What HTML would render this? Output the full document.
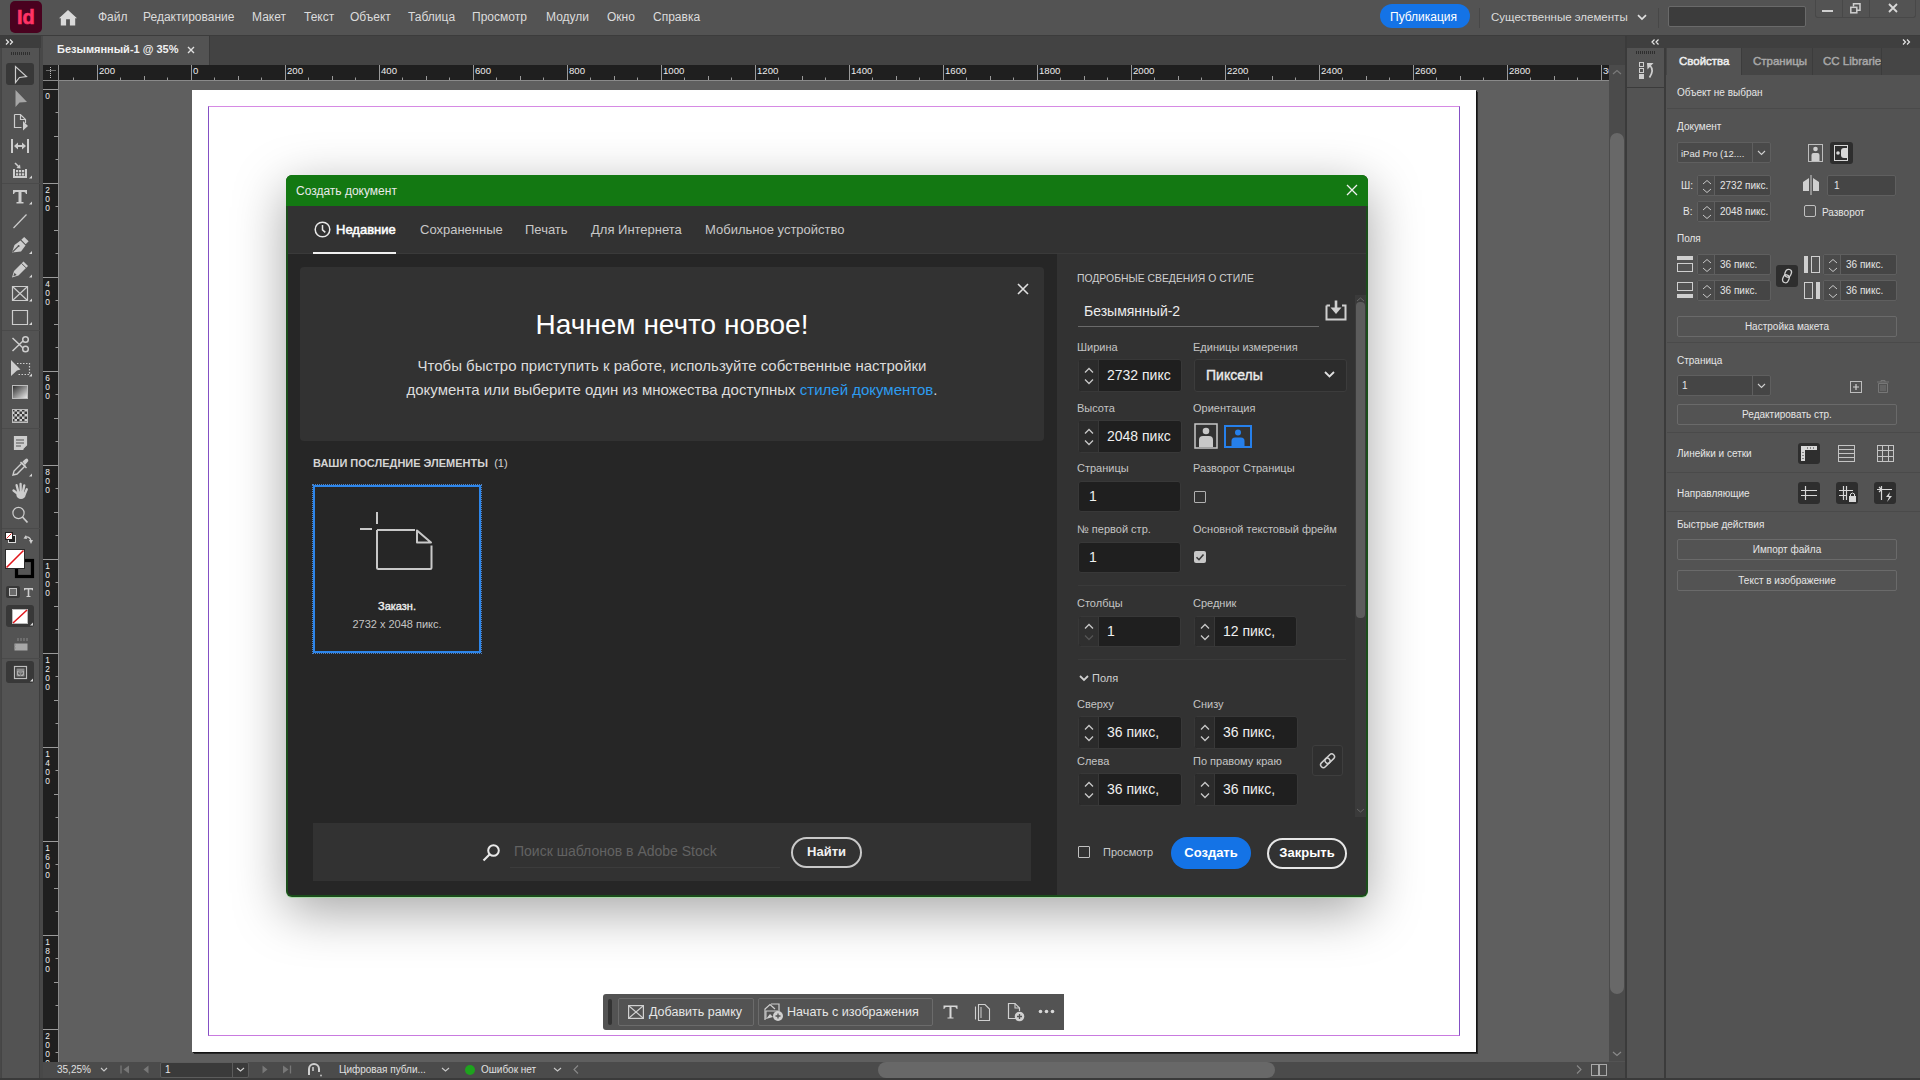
<!DOCTYPE html>
<html><head><meta charset="utf-8">
<style>
*{margin:0;padding:0;box-sizing:border-box}
html,body{width:1920px;height:1080px;overflow:hidden;background:#535353;font-family:"Liberation Sans",sans-serif;color:#d6d6d6}
.a{position:absolute}
svg{position:absolute;overflow:visible}
.dtab{font-size:13px;color:#c8c8c8;white-space:nowrap}
.dl{position:absolute;font-size:11px;color:#c4c4c4;white-space:nowrap}
.fld{position:absolute;background:#1f1f1f;border:1px solid #383838;border-radius:3px;overflow:hidden}
.fld .sp{position:absolute;left:0;top:0;width:20px;height:100%;background:#2b2b2b;border-right:1px solid #383838}
.fld .ft{position:absolute;top:7px;font-size:14px;color:#f0f0f0;white-space:nowrap}
.pt{position:absolute;font-size:11px;white-space:nowrap}
.pp{position:absolute;font-size:10px;color:#e6e6e6;white-space:nowrap}
.pf{position:absolute;background:#454545;border:1px solid #5f5f5f;border-radius:2px;overflow:hidden}
.pf .ps{position:absolute;left:0;top:0;width:17px;height:100%;border-right:1px solid #5f5f5f;background:#4a4a4a}
.pf .pv{position:absolute;left:22px;top:4px;font-size:10px;color:#e6e6e6;white-space:nowrap}
.pb{position:absolute;border:1px solid #6a6a6a;border-radius:2px;font-size:10px;color:#e6e6e6;text-align:center;line-height:19px;white-space:nowrap}
.mi{position:absolute;top:10px;font-size:12px;color:#dcdcdc;white-space:nowrap}
</style></head><body>

<!-- MENU BAR -->
<div class="a" style="left:0;top:0;width:1920px;height:36px;background:#535353;border-bottom:1px solid #3c3c3c"></div>
<div class="a" style="left:10px;top:1px;width:32px;height:32px;background:#49021f;border-radius:5px"></div>
<div class="a" style="left:17px;top:6px;font-size:20px;font-weight:bold;color:#ff3366;-webkit-text-stroke:0.6px #ff3366">Id</div>
<svg style="left:59px;top:9.5px" width="18" height="16"><path d="M9 0L18 8.3L16.2 8.3V15.5H10.9V9.3H7.1V15.5H1.8V8.3H0Z" fill="#d9d9d9"/></svg>
<div class="mi" style="left:98px">Файл</div>
<div class="mi" style="left:143px">Редактирование</div>
<div class="mi" style="left:252px">Макет</div>
<div class="mi" style="left:304px">Текст</div>
<div class="mi" style="left:350px">Объект</div>
<div class="mi" style="left:408px">Таблица</div>
<div class="mi" style="left:472px">Просмотр</div>
<div class="mi" style="left:546px">Модули</div>
<div class="mi" style="left:607px">Окно</div>
<div class="mi" style="left:653px">Справка</div>

<div class="a" style="left:1380px;top:4px;width:90px;height:24px;background:#1473e6;border-radius:12px"></div>
<div class="mi" style="left:1390px;top:10px;color:#fff">Публикация</div>
<div class="a" style="left:1479px;top:8px;width:1px;height:20px;background:#474747"></div>
<div class="mi" style="left:1491px;font-size:11.5px;top:10.5px">Существенные элементы</div>
<svg style="left:1637px;top:14px" width="10" height="7"><path d="M1 1.2L5 5L9 1.2" stroke="#e0e0e0" stroke-width="1.7" fill="none"/></svg>
<div class="a" style="left:1658px;top:8px;width:1px;height:20px;background:#474747"></div>
<div class="a" style="left:1668px;top:6px;width:138px;height:21px;background:#3c3c3c;border:1px solid #6a6a6a;border-radius:2px"></div>
<div class="a" style="left:1815px;top:0;width:101px;height:18px;border:1px solid #484848;border-top:none;border-radius:0 0 3px 3px"></div>
<div class="a" style="left:1842px;top:0;width:1px;height:17px;background:#484848"></div>
<div class="a" style="left:1869px;top:0;width:1px;height:17px;background:#484848"></div>
<div class="a" style="left:1822px;top:10px;width:11px;height:2px;background:#cfcfcf"></div>
<svg style="left:1850px;top:3px" width="11" height="11"><rect x="0.8" y="4.3" width="6" height="5.5" stroke="#cfcfcf" stroke-width="1.5" fill="none"/><path d="M3.5 3.5V0.8H10V7.2H7" stroke="#cfcfcf" stroke-width="1.5" fill="none"/></svg>
<svg style="left:1888px;top:3px" width="10" height="10"><path d="M1 1L9 9M9 1L1 9" stroke="#d8d8d8" stroke-width="1.8"/></svg>

<!-- TAB ROW -->
<div class="a" style="left:0;top:36px;width:1625px;height:29px;background:#434343"></div>
<div class="a" style="left:43px;top:36px;width:167px;height:29px;background:#535353;border-right:1px solid #3a3a3a"></div>
<div class="a" style="left:57px;top:43px;font-size:11px;font-weight:bold;color:#f0f0f0;white-space:nowrap">Безымянный-1 @ 35%</div>
<svg style="left:187px;top:46px" width="8" height="8"><path d="M1 1L7 7M7 1L1 7" stroke="#e0e0e0" stroke-width="1.4"/></svg>

<!-- LEFT TOOLBAR -->
<div class="a" style="left:0;top:36px;width:43px;height:1044px;background:#484848"></div>
<div class="a" style="left:0;top:36px;width:41px;height:12px;background:#3d3d3d"></div>
<svg style="left:5px;top:38px" width="10" height="8"><path d="M1 1.5L3.5 4L1 6.5M5 1.5L7.5 4L5 6.5" stroke="#e6e6e6" stroke-width="1.2" fill="none"/></svg>
<div class="a" style="left:1px;top:48px;width:39px;height:1032px;background:#535353;border-left:1px solid #454545;border-right:1px solid #3e3e3e"></div>
<div class="a" style="left:11px;top:52px;width:19px;height:3px;background:repeating-linear-gradient(90deg,#2e2e2e 0 1px,transparent 1px 2px)"></div>

<!-- TOOL ICONS -->
<div class="a" style="left:6px;top:63px;width:28px;height:22px;background:#383838;border-radius:3px"></div>
<div class="a" style="left:6px;top:605px;width:28px;height:22px;background:#383838;border-radius:3px"></div>
<div class="a" style="left:6px;top:661px;width:28px;height:22px;background:#383838;border-radius:3px"></div>
<svg style="left:0;top:0" width="43" height="700">
<g stroke="#cdcdcd" fill="none" stroke-width="1.2">
<path d="M15.5 66.5V82.5L19.5 77.5L26.5 76.5Z"/>
<path d="M14.5 114.5H20.5L25.5 119.5V123M14.5 114.5V127.5H21.5M20.5 114.5V119.5H25.5"/>
<path d="M12 139V153M28 139V153" stroke-width="2"/><path d="M17 146H23" stroke-width="2"/><path d="M14 146L18 142.5V149.5ZM26 146L22 142.5V149.5Z" fill="#cdcdcd" stroke="none"/>
<path d="M14 169V177H26V169" stroke-width="2"/><path d="M15 163L19 167" stroke-width="1.6"/><path d="M20.5 168.5L16.5 168L20 164.5Z" fill="#cdcdcd" stroke="none"/>
<path d="M16 170H18.2V172.2H16ZM19 170H21.2V172.2H19ZM22 170H24.2V172.2H22ZM16 173.3H18.2V175.5H16ZM19 173.3H21.2V175.5H19ZM22 173.3H24.2V175.5H22Z" fill="#cdcdcd" stroke="none"/>
<path d="M13.5 228L26.5 214.5"/>
<path d="M12.5 286.5H27.5V300.5H12.5Z M12.5 286.5L27.5 300.5M27.5 286.5L12.5 300.5"/>
<path d="M12.5 310.5H27.5V324.5H12.5Z"/>
<path d="M14.5 436.5H26.5V445L23 449.5H14.5Z" fill="#cdcdcd"/>
<circle cx="18.5" cy="513" r="5.6"/>
<path d="M22.5 517L27.5 522.5" stroke-width="1.8"/>
</g>
<!-- T tool -->
<path d="M13 190H27V194H26Q25.5 192 24 192H21.5V202H23.5V203.5H16.5V202H18.5V192H16Q14.5 192 14 194H13Z" fill="#cdcdcd"/>
<path d="M15.5 90V107L19.5 102.5L27 102Z" fill="#a6a6a6"/>
<path d="M23 121V130.5L28 126Z" fill="#cdcdcd"/>
<!-- pen -->
<path d="M12 252.5L14.5 245L20.5 240.5L25.5 245.5L21 251.5Z" fill="#cdcdcd"/>
<path d="M21.3 239.8L24.2 236.9L28.6 241.3L25.7 244.2Z" fill="#cdcdcd"/>
<path d="M12.5 252L18 246.5" stroke="#535353" stroke-width="1.1"/><circle cx="18.6" cy="246" r="1" fill="#535353"/>
<!-- pencil -->
<path d="M12 277.5L14 271L23.5 261.5L28 266L18.5 275.5Z" fill="#cdcdcd"/>
<path d="M21.6 263.4L26.1 267.9" stroke="#535353" stroke-width="1"/>
<path d="M13.3 276.2L14.5 272.8L16.7 275Z" fill="#535353"/>
<!-- scissors -->
<g stroke="#cdcdcd" fill="none" stroke-width="1.5"><circle cx="25.5" cy="339.5" r="2.8"/><circle cx="25.5" cy="349" r="2.8"/><path d="M12.5 338L23 348M12.5 351L23 341"/></g>
<!-- free transform -->
<path d="M11 360L20.5 369.5L17 370.5L11 376Z" fill="#cdcdcd"/>
<path d="M17 363.5H29.5V374.5H17" stroke="#cdcdcd" stroke-width="1.2" stroke-dasharray="1.5 1.5" fill="none"/>
<!-- gradient -->
<defs><linearGradient id="gr" x1="0" y1="0" x2="1" y2="1"><stop offset="0" stop-color="#2a2a2a"/><stop offset="1" stop-color="#f0f0f0"/></linearGradient>
<pattern id="ck" width="5" height="5" patternUnits="userSpaceOnUse" x="12" y="409"><rect width="5" height="5" fill="#cdcdcd"/><rect width="2.5" height="2.5" fill="#3a3a3a"/><rect x="2.5" y="2.5" width="2.5" height="2.5" fill="#3a3a3a"/></pattern></defs>
<rect x="12.5" y="385.5" width="15" height="13" fill="url(#gr)" stroke="#bdbdbd" stroke-width="1"/>
<rect x="12.5" y="409.5" width="15" height="13" fill="url(#ck)" stroke="#bdbdbd" stroke-width="1"/>
<!-- note lines -->
<path d="M16 440H24M16 443H24M16 446H21" stroke="#535353" stroke-width="1.2"/>
<path d="M23 449.5L26.5 446V449.5Z" fill="#535353"/>
<!-- eyedropper -->
<g stroke="#cdcdcd" fill="none" stroke-width="1.4"><path d="M13 475L14 471L22 463L25 466L17 474Z"/><path d="M20.5 462L26.5 468"/></g>
<path d="M22.5 461.5L25.5 459Q27 458 28 459.5Q29 461 27.5 462L25 465Z" fill="#cdcdcd"/>
<!-- hand -->
<g stroke="#cdcdcd" stroke-linecap="round" fill="none" stroke-width="2.3"><path d="M18 494L13.5 490.5"/><path d="M18.2 491.5L16.6 485.2"/><path d="M20.7 491L20.6 484"/><path d="M23 491.5L24.3 485.3"/><path d="M24.8 494L26.8 489.2"/></g><ellipse cx="21" cy="495" rx="4.6" ry="4" fill="#cdcdcd"/>
<!-- tiny triangles -->
<g fill="#d8d8d8">
<path d="M29 178.5H32V175.5Z"/><path d="M29 204.5H32V201.5Z"/><path d="M29 254H32V251Z"/><path d="M29 277.5H32V274.5Z"/>
<path d="M29 301.5H32V298.5Z"/><path d="M29 325H32V322Z"/><path d="M29 376.5H32V373.5Z"/><path d="M29 476.5H32V473.5Z"/>
<path d="M30 625.5H33V622.5Z"/><path d="M30 681.5H33V678.5Z"/>
</g>
<!-- separators -->
<path d="M2 183.5H40M2 330.5H40M2 428.5H40M2 528.5H40M2 658.5H40" stroke="#4a4a4a" stroke-width="1"/>
<!-- default colors small -->
<rect x="8.5" y="535.5" width="7" height="7" fill="#222" stroke="#ddd" stroke-width="1"/>
<rect x="5.5" y="532.5" width="7" height="7" fill="#fff" stroke="#222" stroke-width="1"/>
<path d="M6.5 538.5L11.5 533.5" stroke="#e02020" stroke-width="1"/>
<path d="M25 537Q30 536 31 541" stroke="#cdcdcd" stroke-width="1.3" fill="none"/>
<path d="M23.5 538.5L26 535L27 539Z M29 540H33L31 544Z" fill="#cdcdcd"/>
<!-- stroke swatch -->
<rect x="16.5" y="560.5" width="16" height="16" fill="none" stroke="#000" stroke-width="3.2"/>
<rect x="19" y="563" width="11" height="11" fill="#555"/>
<!-- fill swatch -->
<rect x="5.5" y="549.5" width="19" height="19" fill="#fff" stroke="#2a2a2a" stroke-width="1"/>
<path d="M6.5 567.5L23.5 550.5" stroke="#e0161c" stroke-width="1.6"/>
<!-- container / text -->
<rect x="6" y="586" width="14" height="12" rx="2" fill="#383838"/>
<rect x="9.5" y="588.5" width="7" height="7" fill="#6a6a6a" stroke="#c0c0c0" stroke-width="1"/>
<path d="M24 588H33V590.5H32.5Q32 589.5 31 589.5H29.3V596H30.5V597H26.5V596H27.7V589.5H26Q25 589.5 24.5 590.5H24Z" fill="#cdcdcd"/>
<!-- apply none -->
<rect x="12.5" y="609.5" width="15" height="14" fill="#fff" stroke="#bbb" stroke-width="1"/>
<path d="M13 623L27 610" stroke="#e0161c" stroke-width="1.5"/>
<!-- screen mode -->
<path d="M14.5 643.5H27.5V650.5H14.5Z" fill="#a8a8a8"/>
<path d="M18 638V641M21 638V641M24 638V641M27 638V641M14 645H16M14 648H16" stroke="#8a8a8a" stroke-width="1"/>
<!-- frame icon -->
<rect x="14.5" y="666.5" width="12" height="12" fill="none" stroke="#bdbdbd" stroke-width="1.2"/>
<rect x="16.5" y="668.5" width="8" height="8" fill="#8a8a8a"/>
<path d="M18 671V675H20M23 671V675H21" stroke="#d0d0d0" stroke-width="1"/>
</svg>

<!-- RULERS -->
<div class="a" style="left:43px;top:65px;width:1566px;height:15px;background:#1f1f1f"></div>
<div class="a" style="left:43px;top:80px;width:15px;height:982px;background:#1f1f1f"></div>
<div class="a" style="left:43px;top:80px;width:1566px;height:1px;background:#8a8a8a"></div>
<div class="a" style="left:58px;top:65px;width:1px;height:997px;background:#8a8a8a"></div>
<svg style="left:44px;top:66px" width="14" height="14"><path d="M2.5 4.5H12M6.5 1V13" stroke="#bdbdbd" stroke-width="1" stroke-dasharray="1 1" fill="none"/></svg>
<svg style="left:58px;top:65px" width="1551" height="15"><line x1="15.5" y1="12.5" x2="15.5" y2="15" stroke="#9a9a9a" stroke-width="1"/><line x1="39.5" y1="0" x2="39.5" y2="15" stroke="#9a9a9a" stroke-width="1"/><text x="41.0" y="9" fill="#ececec" font-size="9.6" font-family="Liberation Sans">200</text><line x1="62.5" y1="12.5" x2="62.5" y2="15" stroke="#9a9a9a" stroke-width="1"/><line x1="86.5" y1="11" x2="86.5" y2="15" stroke="#9a9a9a" stroke-width="1"/><line x1="109.5" y1="12.5" x2="109.5" y2="15" stroke="#9a9a9a" stroke-width="1"/><line x1="133.5" y1="0" x2="133.5" y2="15" stroke="#9a9a9a" stroke-width="1"/><text x="135.0" y="9" fill="#ececec" font-size="9.6" font-family="Liberation Sans">0</text><line x1="156.5" y1="12.5" x2="156.5" y2="15" stroke="#9a9a9a" stroke-width="1"/><line x1="180.5" y1="11" x2="180.5" y2="15" stroke="#9a9a9a" stroke-width="1"/><line x1="203.5" y1="12.5" x2="203.5" y2="15" stroke="#9a9a9a" stroke-width="1"/><line x1="227.5" y1="0" x2="227.5" y2="15" stroke="#9a9a9a" stroke-width="1"/><text x="229.0" y="9" fill="#ececec" font-size="9.6" font-family="Liberation Sans">200</text><line x1="250.5" y1="12.5" x2="250.5" y2="15" stroke="#9a9a9a" stroke-width="1"/><line x1="274.5" y1="11" x2="274.5" y2="15" stroke="#9a9a9a" stroke-width="1"/><line x1="297.5" y1="12.5" x2="297.5" y2="15" stroke="#9a9a9a" stroke-width="1"/><line x1="321.5" y1="0" x2="321.5" y2="15" stroke="#9a9a9a" stroke-width="1"/><text x="323.0" y="9" fill="#ececec" font-size="9.6" font-family="Liberation Sans">400</text><line x1="344.5" y1="12.5" x2="344.5" y2="15" stroke="#9a9a9a" stroke-width="1"/><line x1="368.5" y1="11" x2="368.5" y2="15" stroke="#9a9a9a" stroke-width="1"/><line x1="391.5" y1="12.5" x2="391.5" y2="15" stroke="#9a9a9a" stroke-width="1"/><line x1="415.5" y1="0" x2="415.5" y2="15" stroke="#9a9a9a" stroke-width="1"/><text x="417.0" y="9" fill="#ececec" font-size="9.6" font-family="Liberation Sans">600</text><line x1="438.5" y1="12.5" x2="438.5" y2="15" stroke="#9a9a9a" stroke-width="1"/><line x1="462.5" y1="11" x2="462.5" y2="15" stroke="#9a9a9a" stroke-width="1"/><line x1="485.5" y1="12.5" x2="485.5" y2="15" stroke="#9a9a9a" stroke-width="1"/><line x1="509.5" y1="0" x2="509.5" y2="15" stroke="#9a9a9a" stroke-width="1"/><text x="511.0" y="9" fill="#ececec" font-size="9.6" font-family="Liberation Sans">800</text><line x1="532.5" y1="12.5" x2="532.5" y2="15" stroke="#9a9a9a" stroke-width="1"/><line x1="556.5" y1="11" x2="556.5" y2="15" stroke="#9a9a9a" stroke-width="1"/><line x1="579.5" y1="12.5" x2="579.5" y2="15" stroke="#9a9a9a" stroke-width="1"/><line x1="603.5" y1="0" x2="603.5" y2="15" stroke="#9a9a9a" stroke-width="1"/><text x="605.0" y="9" fill="#ececec" font-size="9.6" font-family="Liberation Sans">1000</text><line x1="626.5" y1="12.5" x2="626.5" y2="15" stroke="#9a9a9a" stroke-width="1"/><line x1="650.5" y1="11" x2="650.5" y2="15" stroke="#9a9a9a" stroke-width="1"/><line x1="673.5" y1="12.5" x2="673.5" y2="15" stroke="#9a9a9a" stroke-width="1"/><line x1="697.5" y1="0" x2="697.5" y2="15" stroke="#9a9a9a" stroke-width="1"/><text x="699.0" y="9" fill="#ececec" font-size="9.6" font-family="Liberation Sans">1200</text><line x1="720.5" y1="12.5" x2="720.5" y2="15" stroke="#9a9a9a" stroke-width="1"/><line x1="744.5" y1="11" x2="744.5" y2="15" stroke="#9a9a9a" stroke-width="1"/><line x1="767.5" y1="12.5" x2="767.5" y2="15" stroke="#9a9a9a" stroke-width="1"/><line x1="791.5" y1="0" x2="791.5" y2="15" stroke="#9a9a9a" stroke-width="1"/><text x="793.0" y="9" fill="#ececec" font-size="9.6" font-family="Liberation Sans">1400</text><line x1="814.5" y1="12.5" x2="814.5" y2="15" stroke="#9a9a9a" stroke-width="1"/><line x1="838.5" y1="11" x2="838.5" y2="15" stroke="#9a9a9a" stroke-width="1"/><line x1="861.5" y1="12.5" x2="861.5" y2="15" stroke="#9a9a9a" stroke-width="1"/><line x1="885.5" y1="0" x2="885.5" y2="15" stroke="#9a9a9a" stroke-width="1"/><text x="887.0" y="9" fill="#ececec" font-size="9.6" font-family="Liberation Sans">1600</text><line x1="908.5" y1="12.5" x2="908.5" y2="15" stroke="#9a9a9a" stroke-width="1"/><line x1="932.5" y1="11" x2="932.5" y2="15" stroke="#9a9a9a" stroke-width="1"/><line x1="955.5" y1="12.5" x2="955.5" y2="15" stroke="#9a9a9a" stroke-width="1"/><line x1="979.5" y1="0" x2="979.5" y2="15" stroke="#9a9a9a" stroke-width="1"/><text x="981.0" y="9" fill="#ececec" font-size="9.6" font-family="Liberation Sans">1800</text><line x1="1002.5" y1="12.5" x2="1002.5" y2="15" stroke="#9a9a9a" stroke-width="1"/><line x1="1026.5" y1="11" x2="1026.5" y2="15" stroke="#9a9a9a" stroke-width="1"/><line x1="1049.5" y1="12.5" x2="1049.5" y2="15" stroke="#9a9a9a" stroke-width="1"/><line x1="1073.5" y1="0" x2="1073.5" y2="15" stroke="#9a9a9a" stroke-width="1"/><text x="1075.0" y="9" fill="#ececec" font-size="9.6" font-family="Liberation Sans">2000</text><line x1="1096.5" y1="12.5" x2="1096.5" y2="15" stroke="#9a9a9a" stroke-width="1"/><line x1="1120.5" y1="11" x2="1120.5" y2="15" stroke="#9a9a9a" stroke-width="1"/><line x1="1143.5" y1="12.5" x2="1143.5" y2="15" stroke="#9a9a9a" stroke-width="1"/><line x1="1167.5" y1="0" x2="1167.5" y2="15" stroke="#9a9a9a" stroke-width="1"/><text x="1169.0" y="9" fill="#ececec" font-size="9.6" font-family="Liberation Sans">2200</text><line x1="1190.5" y1="12.5" x2="1190.5" y2="15" stroke="#9a9a9a" stroke-width="1"/><line x1="1214.5" y1="11" x2="1214.5" y2="15" stroke="#9a9a9a" stroke-width="1"/><line x1="1237.5" y1="12.5" x2="1237.5" y2="15" stroke="#9a9a9a" stroke-width="1"/><line x1="1261.5" y1="0" x2="1261.5" y2="15" stroke="#9a9a9a" stroke-width="1"/><text x="1263.0" y="9" fill="#ececec" font-size="9.6" font-family="Liberation Sans">2400</text><line x1="1284.5" y1="12.5" x2="1284.5" y2="15" stroke="#9a9a9a" stroke-width="1"/><line x1="1308.5" y1="11" x2="1308.5" y2="15" stroke="#9a9a9a" stroke-width="1"/><line x1="1331.5" y1="12.5" x2="1331.5" y2="15" stroke="#9a9a9a" stroke-width="1"/><line x1="1355.5" y1="0" x2="1355.5" y2="15" stroke="#9a9a9a" stroke-width="1"/><text x="1357.0" y="9" fill="#ececec" font-size="9.6" font-family="Liberation Sans">2600</text><line x1="1378.5" y1="12.5" x2="1378.5" y2="15" stroke="#9a9a9a" stroke-width="1"/><line x1="1402.5" y1="11" x2="1402.5" y2="15" stroke="#9a9a9a" stroke-width="1"/><line x1="1425.5" y1="12.5" x2="1425.5" y2="15" stroke="#9a9a9a" stroke-width="1"/><line x1="1449.5" y1="0" x2="1449.5" y2="15" stroke="#9a9a9a" stroke-width="1"/><text x="1451.0" y="9" fill="#ececec" font-size="9.6" font-family="Liberation Sans">2800</text><line x1="1472.5" y1="12.5" x2="1472.5" y2="15" stroke="#9a9a9a" stroke-width="1"/><line x1="1496.5" y1="11" x2="1496.5" y2="15" stroke="#9a9a9a" stroke-width="1"/><line x1="1519.5" y1="12.5" x2="1519.5" y2="15" stroke="#9a9a9a" stroke-width="1"/><line x1="1543.5" y1="0" x2="1543.5" y2="15" stroke="#9a9a9a" stroke-width="1"/><text x="1545.0" y="9" fill="#ececec" font-size="9.6" font-family="Liberation Sans">3000</text></svg>
<svg style="left:43px;top:80px" width="15" height="981"><line x1="0" y1="9.5" x2="15" y2="9.5" stroke="#9a9a9a" stroke-width="1"/><text transform="translate(2.2,19.1) scale(0.85,1)" fill="#ececec" font-size="9.8" font-family="Liberation Sans">0</text><line x1="12.5" y1="32.5" x2="15" y2="32.5" stroke="#9a9a9a" stroke-width="1"/><line x1="11" y1="56.5" x2="15" y2="56.5" stroke="#9a9a9a" stroke-width="1"/><line x1="12.5" y1="79.5" x2="15" y2="79.5" stroke="#9a9a9a" stroke-width="1"/><line x1="0" y1="103.5" x2="15" y2="103.5" stroke="#9a9a9a" stroke-width="1"/><text transform="translate(2.2,113.1) scale(0.85,1)" fill="#ececec" font-size="9.8" font-family="Liberation Sans">2</text><text transform="translate(2.2,122.0) scale(0.85,1)" fill="#ececec" font-size="9.8" font-family="Liberation Sans">0</text><text transform="translate(2.2,130.9) scale(0.85,1)" fill="#ececec" font-size="9.8" font-family="Liberation Sans">0</text><line x1="12.5" y1="126.5" x2="15" y2="126.5" stroke="#9a9a9a" stroke-width="1"/><line x1="11" y1="150.5" x2="15" y2="150.5" stroke="#9a9a9a" stroke-width="1"/><line x1="12.5" y1="173.5" x2="15" y2="173.5" stroke="#9a9a9a" stroke-width="1"/><line x1="0" y1="197.5" x2="15" y2="197.5" stroke="#9a9a9a" stroke-width="1"/><text transform="translate(2.2,207.1) scale(0.85,1)" fill="#ececec" font-size="9.8" font-family="Liberation Sans">4</text><text transform="translate(2.2,216.0) scale(0.85,1)" fill="#ececec" font-size="9.8" font-family="Liberation Sans">0</text><text transform="translate(2.2,224.9) scale(0.85,1)" fill="#ececec" font-size="9.8" font-family="Liberation Sans">0</text><line x1="12.5" y1="220.5" x2="15" y2="220.5" stroke="#9a9a9a" stroke-width="1"/><line x1="11" y1="244.5" x2="15" y2="244.5" stroke="#9a9a9a" stroke-width="1"/><line x1="12.5" y1="267.5" x2="15" y2="267.5" stroke="#9a9a9a" stroke-width="1"/><line x1="0" y1="291.5" x2="15" y2="291.5" stroke="#9a9a9a" stroke-width="1"/><text transform="translate(2.2,301.1) scale(0.85,1)" fill="#ececec" font-size="9.8" font-family="Liberation Sans">6</text><text transform="translate(2.2,310.0) scale(0.85,1)" fill="#ececec" font-size="9.8" font-family="Liberation Sans">0</text><text transform="translate(2.2,318.9) scale(0.85,1)" fill="#ececec" font-size="9.8" font-family="Liberation Sans">0</text><line x1="12.5" y1="314.5" x2="15" y2="314.5" stroke="#9a9a9a" stroke-width="1"/><line x1="11" y1="338.5" x2="15" y2="338.5" stroke="#9a9a9a" stroke-width="1"/><line x1="12.5" y1="361.5" x2="15" y2="361.5" stroke="#9a9a9a" stroke-width="1"/><line x1="0" y1="385.5" x2="15" y2="385.5" stroke="#9a9a9a" stroke-width="1"/><text transform="translate(2.2,395.1) scale(0.85,1)" fill="#ececec" font-size="9.8" font-family="Liberation Sans">8</text><text transform="translate(2.2,404.0) scale(0.85,1)" fill="#ececec" font-size="9.8" font-family="Liberation Sans">0</text><text transform="translate(2.2,412.9) scale(0.85,1)" fill="#ececec" font-size="9.8" font-family="Liberation Sans">0</text><line x1="12.5" y1="408.5" x2="15" y2="408.5" stroke="#9a9a9a" stroke-width="1"/><line x1="11" y1="432.5" x2="15" y2="432.5" stroke="#9a9a9a" stroke-width="1"/><line x1="12.5" y1="455.5" x2="15" y2="455.5" stroke="#9a9a9a" stroke-width="1"/><line x1="0" y1="479.5" x2="15" y2="479.5" stroke="#9a9a9a" stroke-width="1"/><text transform="translate(2.2,489.1) scale(0.85,1)" fill="#ececec" font-size="9.8" font-family="Liberation Sans">1</text><text transform="translate(2.2,498.0) scale(0.85,1)" fill="#ececec" font-size="9.8" font-family="Liberation Sans">0</text><text transform="translate(2.2,506.9) scale(0.85,1)" fill="#ececec" font-size="9.8" font-family="Liberation Sans">0</text><text transform="translate(2.2,515.8) scale(0.85,1)" fill="#ececec" font-size="9.8" font-family="Liberation Sans">0</text><line x1="12.5" y1="502.5" x2="15" y2="502.5" stroke="#9a9a9a" stroke-width="1"/><line x1="11" y1="526.5" x2="15" y2="526.5" stroke="#9a9a9a" stroke-width="1"/><line x1="12.5" y1="549.5" x2="15" y2="549.5" stroke="#9a9a9a" stroke-width="1"/><line x1="0" y1="573.5" x2="15" y2="573.5" stroke="#9a9a9a" stroke-width="1"/><text transform="translate(2.2,583.1) scale(0.85,1)" fill="#ececec" font-size="9.8" font-family="Liberation Sans">1</text><text transform="translate(2.2,592.0) scale(0.85,1)" fill="#ececec" font-size="9.8" font-family="Liberation Sans">2</text><text transform="translate(2.2,600.9) scale(0.85,1)" fill="#ececec" font-size="9.8" font-family="Liberation Sans">0</text><text transform="translate(2.2,609.8) scale(0.85,1)" fill="#ececec" font-size="9.8" font-family="Liberation Sans">0</text><line x1="12.5" y1="596.5" x2="15" y2="596.5" stroke="#9a9a9a" stroke-width="1"/><line x1="11" y1="620.5" x2="15" y2="620.5" stroke="#9a9a9a" stroke-width="1"/><line x1="12.5" y1="643.5" x2="15" y2="643.5" stroke="#9a9a9a" stroke-width="1"/><line x1="0" y1="667.5" x2="15" y2="667.5" stroke="#9a9a9a" stroke-width="1"/><text transform="translate(2.2,677.1) scale(0.85,1)" fill="#ececec" font-size="9.8" font-family="Liberation Sans">1</text><text transform="translate(2.2,686.0) scale(0.85,1)" fill="#ececec" font-size="9.8" font-family="Liberation Sans">4</text><text transform="translate(2.2,694.9) scale(0.85,1)" fill="#ececec" font-size="9.8" font-family="Liberation Sans">0</text><text transform="translate(2.2,703.8) scale(0.85,1)" fill="#ececec" font-size="9.8" font-family="Liberation Sans">0</text><line x1="12.5" y1="690.5" x2="15" y2="690.5" stroke="#9a9a9a" stroke-width="1"/><line x1="11" y1="714.5" x2="15" y2="714.5" stroke="#9a9a9a" stroke-width="1"/><line x1="12.5" y1="737.5" x2="15" y2="737.5" stroke="#9a9a9a" stroke-width="1"/><line x1="0" y1="761.5" x2="15" y2="761.5" stroke="#9a9a9a" stroke-width="1"/><text transform="translate(2.2,771.1) scale(0.85,1)" fill="#ececec" font-size="9.8" font-family="Liberation Sans">1</text><text transform="translate(2.2,780.0) scale(0.85,1)" fill="#ececec" font-size="9.8" font-family="Liberation Sans">6</text><text transform="translate(2.2,788.9) scale(0.85,1)" fill="#ececec" font-size="9.8" font-family="Liberation Sans">0</text><text transform="translate(2.2,797.8) scale(0.85,1)" fill="#ececec" font-size="9.8" font-family="Liberation Sans">0</text><line x1="12.5" y1="784.5" x2="15" y2="784.5" stroke="#9a9a9a" stroke-width="1"/><line x1="11" y1="808.5" x2="15" y2="808.5" stroke="#9a9a9a" stroke-width="1"/><line x1="12.5" y1="831.5" x2="15" y2="831.5" stroke="#9a9a9a" stroke-width="1"/><line x1="0" y1="855.5" x2="15" y2="855.5" stroke="#9a9a9a" stroke-width="1"/><text transform="translate(2.2,865.1) scale(0.85,1)" fill="#ececec" font-size="9.8" font-family="Liberation Sans">1</text><text transform="translate(2.2,874.0) scale(0.85,1)" fill="#ececec" font-size="9.8" font-family="Liberation Sans">8</text><text transform="translate(2.2,882.9) scale(0.85,1)" fill="#ececec" font-size="9.8" font-family="Liberation Sans">0</text><text transform="translate(2.2,891.8) scale(0.85,1)" fill="#ececec" font-size="9.8" font-family="Liberation Sans">0</text><line x1="12.5" y1="878.5" x2="15" y2="878.5" stroke="#9a9a9a" stroke-width="1"/><line x1="11" y1="902.5" x2="15" y2="902.5" stroke="#9a9a9a" stroke-width="1"/><line x1="12.5" y1="925.5" x2="15" y2="925.5" stroke="#9a9a9a" stroke-width="1"/><line x1="0" y1="949.5" x2="15" y2="949.5" stroke="#9a9a9a" stroke-width="1"/><text transform="translate(2.2,959.1) scale(0.85,1)" fill="#ececec" font-size="9.8" font-family="Liberation Sans">2</text><text transform="translate(2.2,968.0) scale(0.85,1)" fill="#ececec" font-size="9.8" font-family="Liberation Sans">0</text><text transform="translate(2.2,976.9) scale(0.85,1)" fill="#ececec" font-size="9.8" font-family="Liberation Sans">0</text><text transform="translate(2.2,985.8) scale(0.85,1)" fill="#ececec" font-size="9.8" font-family="Liberation Sans">0</text><line x1="12.5" y1="972.5" x2="15" y2="972.5" stroke="#9a9a9a" stroke-width="1"/></svg>

<!-- CANVAS -->
<div class="a" style="left:59px;top:81px;width:1550px;height:981px;background:#5f5f5f"></div>
<div class="a" style="left:192px;top:90px;width:1284px;height:962px;background:#fff;box-shadow:1px 1px 0 #141414,2px 2px 0 #2a2a2a"></div>
<div class="a" style="left:208px;top:106px;width:1252px;height:930px;border-top:1px solid #d68ae4;border-bottom:1px solid #c97ae0;border-left:1px solid #8450c4;border-right:1px solid #8450c4"></div>

<!-- canvas vertical scrollbar -->
<div class="a" style="left:1609px;top:65px;width:16px;height:996px;background:#4b4b4b"></div>
<svg style="left:1612px;top:69px" width="10" height="6"><path d="M1 5L5 1.5L9 5" stroke="#7a7a7a" stroke-width="1.2" fill="none"/></svg>
<div class="a" style="left:1610px;top:133px;width:14px;height:861px;background:#686868;border-radius:7px"></div>
<svg style="left:1612px;top:1051px" width="10" height="6"><path d="M1 1L5 4.5L9 1" stroke="#8a8a8a" stroke-width="1.2" fill="none"/></svg>

<!-- STATUS BAR -->
<div class="a" style="left:43px;top:1062px;width:1582px;height:16px;background:#4b4b4b"></div>
<div class="a" style="left:0;top:1078px;width:1920px;height:2px;background:#3a3a3a"></div>
<div class="a" style="left:57px;top:1064px;font-size:10px;color:#e0e0e0">35,25%</div>
<svg style="left:100px;top:1067px" width="8" height="5"><path d="M1 1L4 4L7 1" stroke="#c8c8c8" stroke-width="1.1" fill="none"/></svg>
<svg style="left:120px;top:1065px" width="10" height="9"><path d="M1 0.5V8.5" stroke="#777" stroke-width="1.3"/><path d="M9 0.5L3.5 4.5L9 8.5Z" fill="#777"/></svg>
<svg style="left:143px;top:1065px" width="6" height="9"><path d="M5.5 0.5L0.5 4.5L5.5 8.5Z" fill="#777"/></svg>
<div class="a" style="left:160px;top:1062px;width:89px;height:16px;background:#3a3a3a;border:1px solid #5c5c5c;border-radius:2px"></div>
<div class="a" style="left:232px;top:1062px;width:1px;height:16px;background:#5c5c5c"></div>
<div class="a" style="left:165px;top:1064px;font-size:10px;color:#e8e8e8">1</div>
<svg style="left:236px;top:1067px" width="9" height="5"><path d="M1 1L4.5 4L8 1" stroke="#d0d0d0" stroke-width="1.1" fill="none"/></svg>
<svg style="left:262px;top:1065px" width="6" height="9"><path d="M0.5 0.5L5.5 4.5L0.5 8.5Z" fill="#777"/></svg>
<svg style="left:282px;top:1065px" width="10" height="9"><path d="M1 0.5L6.5 4.5L1 8.5Z" fill="#777"/><path d="M8.5 0.5V8.5" stroke="#777" stroke-width="1.3"/></svg>
<svg style="left:307px;top:1063px" width="16" height="14"><path d="M2 12V6A5 5 0 0 1 12 6V9" stroke="#d0d0d0" stroke-width="2" fill="none"/><path d="M6 4V8" stroke="#d0d0d0" stroke-width="1.5"/><circle cx="14" cy="12.5" r="1" fill="#bbb"/></svg>
<div class="a" style="left:339px;top:1064px;font-size:10px;color:#e0e0e0;white-space:nowrap">Цифровая публи...</div>
<svg style="left:441px;top:1067px" width="9" height="5"><path d="M1 1L4.5 4L8 1" stroke="#c8c8c8" stroke-width="1.1" fill="none"/></svg>
<div class="a" style="left:465px;top:1065px;width:10px;height:10px;border-radius:5px;background:#1ea31e"></div>
<div class="a" style="left:481px;top:1064px;font-size:10px;color:#e0e0e0;white-space:nowrap">Ошибок нет</div>
<svg style="left:553px;top:1067px" width="9" height="5"><path d="M1 1L4.5 4L8 1" stroke="#c8c8c8" stroke-width="1.1" fill="none"/></svg>
<svg style="left:573px;top:1065px" width="6" height="9"><path d="M5 0.5L1 4.5L5 8.5" stroke="#8a8a8a" stroke-width="1.1" fill="none"/></svg>
<div class="a" style="left:878px;top:1062px;width:397px;height:16px;background:#686868;border-radius:8px"></div>
<svg style="left:1576px;top:1065px" width="6" height="9"><path d="M1 0.5L5 4.5L1 8.5" stroke="#8a8a8a" stroke-width="1.1" fill="none"/></svg>
<div class="a" style="left:1591px;top:1064px;width:16px;height:12px;border:1.5px solid #a8a8a8"></div>
<div class="a" style="left:1598px;top:1064px;width:1.5px;height:12px;background:#a8a8a8"></div>

<!-- RIGHT DOCK BORDERS -->
<div class="a" style="left:1625px;top:36px;width:295px;height:1042px;background:#535353"></div>
<div class="a" style="left:1625px;top:36px;width:2px;height:1042px;background:#3b3b3b"></div>
<div class="a" style="left:1664px;top:36px;width:2px;height:1042px;background:#3b3b3b"></div>
<div class="a" style="left:1627px;top:36px;width:293px;height:12px;background:#3f3f3f"></div>
<svg style="left:1650px;top:38px" width="10" height="8"><path d="M4.5 1.5L2 4L4.5 6.5M8.5 1.5L6 4L8.5 6.5" stroke="#e6e6e6" stroke-width="1.2" fill="none"/></svg>
<svg style="left:1902px;top:38px" width="10" height="8"><path d="M1 1.5L3.5 4L1 6.5M5 1.5L7.5 4L5 6.5" stroke="#e6e6e6" stroke-width="1.2" fill="none"/></svg>
<div class="a" style="left:1627px;top:87px;width:37px;height:1px;background:#3b3b3b"></div>
<div class="a" style="left:1636px;top:51px;width:19px;height:3px;background:repeating-linear-gradient(90deg,#2e2e2e 0 1px,transparent 1px 2px)"></div>

<!-- FLOATING CONTEXT BAR -->
<div class="a" style="left:603px;top:994px;width:461px;height:36px;background:#535353;border-radius:3px 0 0 3px"></div>
<div class="a" style="left:608px;top:999px;width:4px;height:26px;background:#333;border-radius:2px"></div>
<div class="a" style="left:618px;top:998px;width:136px;height:28px;border:1px solid #6b6b6b;border-radius:2px"></div>
<svg style="left:628px;top:1005px" width="16" height="14"><rect x="0.6" y="0.6" width="14.8" height="12.8" stroke="#d0d0d0" stroke-width="1.2" fill="none"/><path d="M1 1L15 13M15 1L1 13" stroke="#d0d0d0" stroke-width="1.1"/></svg>
<div class="a" style="left:649px;top:1004.5px;font-size:12.5px;color:#e6e6e6;white-space:nowrap">Добавить рамку</div>
<div class="a" style="left:758px;top:998px;width:175px;height:28px;border:1px solid #6b6b6b;border-radius:2px"></div>
<svg style="left:764px;top:1003px" width="20" height="18"><path d="M1 17V6L6 1.5L11 6" stroke="#d0d0d0" stroke-width="1.2" fill="none"/><path d="M2 16V8H14V9" stroke="#d0d0d0" stroke-width="1" fill="none"/><path d="M7 1H15V8" stroke="#d0d0d0" stroke-width="1.2" fill="none"/><path d="M2 16L6 11L9 14" fill="#d0d0d0"/><circle cx="14" cy="13" r="5" fill="#d0d0d0"/><path d="M14 10.5V15.5M11.5 13H16.5" stroke="#535353" stroke-width="1.3"/></svg>
<div class="a" style="left:787px;top:1004.5px;font-size:12.6px;color:#e6e6e6;white-space:nowrap">Начать с изображения</div>
<svg style="left:943px;top:1005px" width="15" height="14"><path d="M0.5 0.5H14.5V4H13.7Q13.3 2 11.5 2H8.5V12.5H10.5V13.5H4.5V12.5H6.5V2H3.5Q1.7 2 1.3 4H0.5Z" fill="#d8d8d8"/></svg>
<svg style="left:975px;top:1004px" width="15" height="17"><path d="M3.5 0.5H10L14.5 5V16.5H3.5Z" stroke="#d0d0d0" stroke-width="1.1" fill="none"/><path d="M0.5 2.5V15.5" stroke="#d0d0d0" stroke-width="1.1"/><path d="M6 3V14" stroke="#d0d0d0" stroke-width="1"/></svg>
<svg style="left:1007px;top:1003px" width="18" height="19"><path d="M9 15.5H1.5V0.5H8L12.5 5V8" stroke="#d0d0d0" stroke-width="1.2" fill="none"/><path d="M8 0.5V5H12.5" stroke="#d0d0d0" stroke-width="1.1" fill="none"/><circle cx="12.5" cy="13.5" r="4.8" fill="#d0d0d0"/><path d="M12.5 11V16M10 13.5H15" stroke="#535353" stroke-width="1.3"/></svg>
<svg style="left:1038px;top:1009px" width="18" height="5"><circle cx="2.5" cy="2.5" r="1.8" fill="#d8d8d8"/><circle cx="8.5" cy="2.5" r="1.8" fill="#d8d8d8"/><circle cx="14.5" cy="2.5" r="1.8" fill="#d8d8d8"/></svg>

<!-- DIALOG -->
<div class="a" style="left:286px;top:175px;width:1082px;height:722px;border-radius:6px;box-shadow:0 1px 0 #a9d9a9,0 14px 52px rgba(0,0,0,0.36);background:#1b4d1b"></div>
<div class="a" style="left:286px;top:175px;width:1082px;height:31px;background:#137812;border-radius:6px 6px 0 0"></div>
<div class="a" style="left:296px;top:184px;font-size:12px;color:#eaeaea;white-space:nowrap">Создать документ</div>
<svg style="left:1346px;top:184px" width="12" height="12"><path d="M1 1L11 11M11 1L1 11" stroke="#f0f0f0" stroke-width="1.3"/></svg>
<div class="a" style="left:288px;top:206px;width:1078px;height:689px;background:#262626;border-radius:0 0 4px 4px"></div>
<div class="a" style="left:288px;top:206px;width:1078px;height:48px;background:#323232"></div>
<div class="a" style="left:1057px;top:254px;width:309px;height:641px;background:#323232;border-radius:0 0 4px 0"></div>

<!-- tabs -->
<svg style="left:314px;top:221px" width="17" height="17"><circle cx="8.5" cy="8.5" r="7.3" stroke="#e8e8e8" stroke-width="1.5" fill="none"/><path d="M8.5 4V8.8L11.3 11.4" stroke="#e8e8e8" stroke-width="1.5" fill="none"/></svg>
<div class="a dtab" style="left:336px;top:222px;color:#fff;-webkit-text-stroke:0.5px #fff">Недавние</div>
<div class="a dtab" style="left:420px;top:222px">Сохраненные</div>
<div class="a dtab" style="left:525px;top:222px">Печать</div>
<div class="a dtab" style="left:591px;top:222px">Для Интернета</div>
<div class="a dtab" style="left:705px;top:222px">Мобильное устройство</div>
<div class="a" style="left:288px;top:253px;width:1078px;height:1px;background:#3a3a3a"></div>
<div class="a" style="left:313px;top:252px;width:83px;height:2px;background:#f0f0f0"></div>

<!-- hero -->
<div class="a" style="left:300px;top:267px;width:744px;height:174px;background:#323232;border-radius:4px"></div>
<svg style="left:1017px;top:283px" width="12" height="12"><path d="M1 1L11 11M11 1L1 11" stroke="#e0e0e0" stroke-width="1.6"/></svg>
<div class="a" style="left:300px;top:309px;width:744px;text-align:center;font-size:28px;color:#fff;white-space:nowrap">Начнем нечто новое!</div>
<div class="a" style="left:300px;top:354px;width:744px;text-align:center;font-size:15px;line-height:24px;color:#dcdcdc;white-space:nowrap">Чтобы быстро приступить к работе, используйте собственные настройки<br>документа или выберите один из множества доступных <span style="color:#2d9cf0">стилей документов</span>.</div>

<!-- recent -->
<div class="a" style="left:313px;top:457px;font-size:11px;font-weight:bold;color:#d4d4d4;white-space:nowrap">ВАШИ ПОСЛЕДНИЕ ЭЛЕМЕНТЫ&nbsp;&nbsp;<span style="font-weight:normal">(1)</span></div>
<div class="a" style="left:312px;top:484px;width:170px;height:170px;border:1px dotted #4d7fc0;background:#262626"></div><div class="a" style="left:313px;top:485px;width:168px;height:168px;border:2px solid #2d86ea"></div>
<svg style="left:355px;top:508px" width="80" height="66"><path d="M22 4V16M5 21H17" stroke="#c8c8c8" stroke-width="2" fill="none"/><path d="M22 22H60M76.5 37.5V59.5Q76.5 61 75 61H23.5Q22 61 22 59.5V22" stroke="#c8c8c8" stroke-width="2" fill="none"/><path d="M62 22.5V34.5H76L62 22.5Z" stroke="#c8c8c8" stroke-width="2" fill="none" stroke-linejoin="round"/></svg>
<div class="a" style="left:312px;top:600px;width:170px;text-align:center;font-size:11px;color:#f0f0f0;-webkit-text-stroke:0.35px #f0f0f0">Заказн.</div>
<div class="a" style="left:312px;top:618px;width:170px;text-align:center;font-size:11px;color:#c4c4c4">2732 x 2048 пикс.</div>

<!-- search -->
<div class="a" style="left:313px;top:823px;width:718px;height:58px;background:#323232"></div>
<svg style="left:482px;top:843px" width="19" height="19"><circle cx="11.5" cy="7.5" r="5.3" stroke="#e8e8e8" stroke-width="2" fill="none"/><path d="M7.5 11.5L1.5 17.5" stroke="#e8e8e8" stroke-width="2.2"/></svg>
<div class="a" style="left:514px;top:843px;font-size:14px;color:#626262;white-space:nowrap">Поиск шаблонов в Adobe Stock</div>
<div class="a" style="left:510px;top:867px;width:270px;height:1px;background:#3c3c3c"></div>
<div class="a" style="left:791px;top:837px;width:71px;height:31px;border:2px solid #c8c8c8;border-radius:16px"></div>
<div class="a" style="left:791px;top:844px;width:71px;text-align:center;font-size:13px;font-weight:bold;color:#f0f0f0">Найти</div>

<!-- dialog right pane -->
<div class="a dl" style="left:1077px;top:273px;color:#cfcfcf;font-size:10.4px">ПОДРОБНЫЕ СВЕДЕНИЯ О СТИЛЕ</div>
<div class="a" style="left:1084px;top:303px;font-size:14px;color:#ececec">Безымянный-2</div>
<div class="a" style="left:1078px;top:326px;width:241px;height:1px;background:#6a6a6a"></div>
<svg style="left:1325px;top:300px" width="23" height="22"><path d="M1.5 5.5V19.5H20.5V5.5H17" stroke="#cfcfcf" stroke-width="2" fill="none"/><path d="M5 5.5H1.5" stroke="#cfcfcf" stroke-width="2"/><path d="M11 0.5V8" stroke="#cfcfcf" stroke-width="2.6"/><path d="M5.5 7.5H16.5L11 14Z" fill="#cfcfcf"/></svg>
<div class="a" style="left:1355px;top:295px;width:11px;height:522px;background:#3a3a3a"></div>
<div class="a" style="left:1356px;top:302px;width:9px;height:316px;background:#5c5c5c;border-radius:4px"></div>
<svg style="left:1356px;top:297px" width="9" height="5"><path d="M1 4L4.5 1L8 4" stroke="#666" stroke-width="1" fill="none"/></svg>
<svg style="left:1356px;top:808px" width="9" height="5"><path d="M1 1L4.5 4L8 1" stroke="#666" stroke-width="1" fill="none"/></svg>

<div class="a dl" style="left:1077px;top:341px">Ширина</div>
<div class="a dl" style="left:1193px;top:341px">Единицы измерения</div>
<div class="a fld" style="left:1078px;top:359px;width:104px;height:33px"><div class="sp"></div><svg style="left:4px;top:7px" width="12" height="18"><path d="M2 5.5L6 1.5L10 5.5M2 12.5L6 16.5L10 12.5" stroke="#c8c8c8" stroke-width="1.3" fill="none"/></svg><div class="ft" style="left:28px">2732 пикс</div></div>
<div class="a" style="left:1194px;top:359px;width:153px;height:33px;background:#2c2c2c;border:1px solid #3c3c3c;border-radius:3px"></div>
<div class="a" style="left:1206px;top:367px;font-size:14px;-webkit-text-stroke:0.35px #ececec;color:#ececec">Пикселы</div>
<svg style="left:1324px;top:371px" width="11" height="7"><path d="M1 1L5.5 5.5L10 1" stroke="#e0e0e0" stroke-width="1.8" fill="none"/></svg>

<div class="a dl" style="left:1077px;top:402px">Высота</div>
<div class="a dl" style="left:1193px;top:402px">Ориентация</div>
<div class="a fld" style="left:1078px;top:420px;width:104px;height:33px"><div class="sp"></div><svg style="left:4px;top:7px" width="12" height="18"><path d="M2 5.5L6 1.5L10 5.5M2 12.5L6 16.5L10 12.5" stroke="#c8c8c8" stroke-width="1.3" fill="none"/></svg><div class="ft" style="left:28px">2048 пикс</div></div>
<svg style="left:1194px;top:423px" width="24" height="26"><rect x="1" y="1" width="22" height="24" stroke="#c8c8c8" stroke-width="1.5" fill="none"/><circle cx="12" cy="8" r="3.3" fill="#c8c8c8"/><path d="M5 24V17Q5 13 9 13H15Q19 13 19 17V24Z" fill="#c8c8c8"/></svg>
<svg style="left:1224px;top:425px" width="28" height="23"><rect x="1" y="1" width="26" height="21" stroke="#2680eb" stroke-width="2" fill="none"/><circle cx="14" cy="7.5" r="3" fill="#2680eb"/><path d="M7.5 21.5V16Q7.5 12.5 11 12.5H17Q20.5 12.5 20.5 16V21.5Z" fill="#2680eb"/></svg>

<div class="a dl" style="left:1077px;top:462px">Страницы</div>
<div class="a dl" style="left:1193px;top:462px">Разворот Страницы</div>
<div class="a fld" style="left:1078px;top:481px;width:103px;height:31px"><div class="ft" style="left:10px;top:6px">1</div></div>
<div class="a" style="left:1194px;top:491px;width:12px;height:12px;border:1px solid #b0b0b0;border-radius:1px"></div>

<div class="a dl" style="left:1077px;top:523px">№ первой стр.</div>
<div class="a dl" style="left:1193px;top:523px">Основной текстовый фрейм</div>
<div class="a fld" style="left:1078px;top:542px;width:103px;height:31px"><div class="ft" style="left:10px;top:6px">1</div></div>
<div class="a" style="left:1194px;top:551px;width:12px;height:12px;background:#c8c8c8;border-radius:2px"></div>
<svg style="left:1194px;top:551px" width="12" height="12"><path d="M2.5 6.2L5 8.7L9.5 3.5" stroke="#3a3a3a" stroke-width="1.6" fill="none"/></svg>
<div class="a" style="left:1078px;top:585px;width:268px;height:1px;background:#3a3a3a"></div>

<div class="a dl" style="left:1077px;top:597px">Столбцы</div>
<div class="a dl" style="left:1193px;top:597px">Средник</div>
<div class="a fld" style="left:1078px;top:616px;width:103px;height:31px"><div class="sp" style="background:#2f2f2f"></div><svg style="left:4px;top:6px" width="12" height="18"><path d="M2 5.5L6 1.5L10 5.5" stroke="#c8c8c8" stroke-width="1.3" fill="none"/><path d="M2 12.5L6 16.5L10 12.5" stroke="#555" stroke-width="1.3" fill="none"/></svg><div class="ft" style="left:28px;top:6px">1</div></div>
<div class="a fld" style="left:1194px;top:616px;width:103px;height:31px"><div class="sp"></div><svg style="left:4px;top:6px" width="12" height="18"><path d="M2 5.5L6 1.5L10 5.5M2 12.5L6 16.5L10 12.5" stroke="#c8c8c8" stroke-width="1.3" fill="none"/></svg><div class="ft" style="left:28px;top:6px">12 пикс,</div></div>
<div class="a" style="left:1078px;top:659px;width:268px;height:1px;background:#3a3a3a"></div>

<svg style="left:1079px;top:675px" width="10" height="7"><path d="M1 1L5 5L9 1" stroke="#d0d0d0" stroke-width="1.8" fill="none"/></svg>
<div class="a dl" style="left:1092px;top:672px;color:#d0d0d0">Поля</div>
<div class="a dl" style="left:1077px;top:698px">Сверху</div>
<div class="a dl" style="left:1193px;top:698px">Снизу</div>
<div class="a fld" style="left:1078px;top:716px;width:104px;height:33px"><div class="sp"></div><svg style="left:4px;top:7px" width="12" height="18"><path d="M2 5.5L6 1.5L10 5.5M2 12.5L6 16.5L10 12.5" stroke="#c8c8c8" stroke-width="1.3" fill="none"/></svg><div class="ft" style="left:28px">36 пикс,</div></div>
<div class="a fld" style="left:1194px;top:716px;width:104px;height:33px"><div class="sp"></div><svg style="left:4px;top:7px" width="12" height="18"><path d="M2 5.5L6 1.5L10 5.5M2 12.5L6 16.5L10 12.5" stroke="#c8c8c8" stroke-width="1.3" fill="none"/></svg><div class="ft" style="left:28px">36 пикс,</div></div>
<div class="a dl" style="left:1077px;top:755px">Слева</div>
<div class="a dl" style="left:1193px;top:755px">По правому краю</div>
<div class="a fld" style="left:1078px;top:773px;width:104px;height:33px"><div class="sp"></div><svg style="left:4px;top:7px" width="12" height="18"><path d="M2 5.5L6 1.5L10 5.5M2 12.5L6 16.5L10 12.5" stroke="#c8c8c8" stroke-width="1.3" fill="none"/></svg><div class="ft" style="left:28px">36 пикс,</div></div>
<div class="a fld" style="left:1194px;top:773px;width:104px;height:33px"><div class="sp"></div><svg style="left:4px;top:7px" width="12" height="18"><path d="M2 5.5L6 1.5L10 5.5M2 12.5L6 16.5L10 12.5" stroke="#c8c8c8" stroke-width="1.3" fill="none"/></svg><div class="ft" style="left:28px">36 пикс,</div></div>
<div class="a" style="left:1312px;top:745px;width:31px;height:31px;border:1px solid #3e3e3e;border-radius:3px;background:#2f2f2f"></div>
<svg style="left:1318px;top:751px" width="18" height="18"><g stroke="#d0d0d0" stroke-width="1.5" fill="none"><rect x="4.6" y="6.4" width="5.5" height="11" rx="2.75" transform="rotate(45 7.35 11.9)"/><rect x="9" y="2.1" width="5.5" height="11" rx="2.75" transform="rotate(45 11.75 7.6)"/></g></svg>

<!-- footer -->
<div class="a" style="left:1078px;top:846px;width:12px;height:12px;border:1px solid #c0c0c0;border-radius:1px"></div>
<div class="a dl" style="left:1103px;top:846px;color:#c8c8c8">Просмотр</div>
<div class="a" style="left:1171px;top:837px;width:80px;height:32px;background:#1473e6;border-radius:16px"></div>
<div class="a" style="left:1171px;top:845px;width:80px;text-align:center;font-size:13px;font-weight:bold;color:#fff">Создать</div>
<div class="a" style="left:1267px;top:838px;width:80px;height:31px;border:2px solid #e6e6e6;border-radius:16px"></div>
<div class="a" style="left:1267px;top:845px;width:80px;text-align:center;font-size:13px;font-weight:bold;color:#fff">Закрыть</div>

<!-- right icon column -->
<svg style="left:1639px;top:62px" width="17" height="17"><rect x="0.5" y="0.5" width="4" height="4" stroke="#cfcfcf" stroke-width="1" fill="none"/><rect x="0.5" y="6.5" width="4" height="4" stroke="#cfcfcf" stroke-width="1" fill="none"/><rect x="0" y="12" width="5" height="5" fill="#cfcfcf"/><path d="M8 1H14.5L8.5 7.5Z" fill="#cfcfcf"/><path d="M11 3.5Q15.5 8 10.5 15.5" stroke="#cfcfcf" stroke-width="1.7" fill="none"/></svg>

<!-- properties panel -->
<div class="a" style="left:1666px;top:48px;width:254px;height:27px;background:#454545"></div>
<div class="a" style="left:1667px;top:48px;width:74px;height:28px;background:#535353"></div>
<div class="a" style="left:1741px;top:48px;width:1px;height:27px;background:#3c3c3c"></div>
<div class="a" style="left:1812px;top:48px;width:1px;height:27px;background:#3c3c3c"></div>
<div class="a" style="left:1881px;top:48px;width:1px;height:27px;background:#3c3c3c"></div>
<div class="a pt" style="left:1679px;top:55px;color:#f0f0f0;font-size:11.5px;-webkit-text-stroke:0.45px #f0f0f0">Свойства</div>
<div class="a pt" style="left:1753px;top:55px;color:#a8a8a8;font-size:11.5px;-webkit-text-stroke:0.45px #a8a8a8">Страницы</div>
<div class="a" style="left:1823px;top:55px;width:58px;overflow:hidden;font-size:11.5px;color:#a8a8a8;-webkit-text-stroke:0.45px #a8a8a8;white-space:nowrap">CC Libraries</div>

<div class="a pp" style="left:1677px;top:87px">Объект не выбран</div>
<div class="a" style="left:1667px;top:108px;width:253px;height:1px;background:#4a4a4a"></div>
<div class="a pp" style="left:1677px;top:121px">Документ</div>
<div class="a" style="left:1677px;top:142px;width:94px;height:21px;background:#4a4a4a;border:1px solid #5f5f5f;border-radius:2px"></div>
<div class="a" style="left:1752px;top:143px;width:1px;height:19px;background:#5f5f5f"></div>
<div class="a pp" style="left:1681px;top:148px;font-size:9.5px">iPad Pro (12....</div>
<svg style="left:1757px;top:150px" width="9" height="6"><path d="M1 1L4.5 4.5L8 1" stroke="#d0d0d0" stroke-width="1.1" fill="none"/></svg>
<svg style="left:1808px;top:144px" width="15" height="18"><rect x="0.5" y="0.5" width="14" height="17" stroke="#bdbdbd" stroke-width="1" fill="none"/><circle cx="7.5" cy="5" r="2.3" fill="#cfcfcf"/><path d="M3.5 17V11Q3.5 9 5.5 9H9.5Q11.5 9 11.5 11V17Z" fill="#cfcfcf"/></svg>
<div class="a" style="left:1830px;top:142px;width:23px;height:22px;background:#2e2e2e;border-radius:3px"></div>
<svg style="left:1834px;top:145px" width="14" height="16"><rect x="0.5" y="0.5" width="13" height="15" stroke="#d8d8d8" stroke-width="1" fill="none"/><circle cx="4" cy="8" r="1.8" fill="#d8d8d8"/><path d="M13 3V13H10Q7 13 7 10V6Q7 3 10 3Z" fill="#d8d8d8"/></svg>

<div class="a pp" style="left:1681px;top:180px">Ш:</div>
<div class="a pp" style="left:1683px;top:206px">В:</div>
<div class="a pf" style="left:1697px;top:175px;width:74px;height:21px"><div class="ps"></div><svg style="left:3px;top:3px" width="12" height="15"><path d="M2 5L6 1.5L10 5M2 10L6 13.5L10 10" stroke="#c8c8c8" stroke-width="1" fill="none"/></svg><div class="pv">2732 пикс.</div></div>
<div class="a pf" style="left:1697px;top:201px;width:74px;height:21px"><div class="ps"></div><svg style="left:3px;top:3px" width="12" height="15"><path d="M2 5L6 1.5L10 5M2 10L6 13.5L10 10" stroke="#c8c8c8" stroke-width="1" fill="none"/></svg><div class="pv">2048 пикс.</div></div>
<svg style="left:1802px;top:174px" width="18" height="22"><path d="M1 8L7 4V17L1 17Z M17 8L11 4V17L17 17Z" fill="#cfcfcf"/><path d="M9 1V21" stroke="#cfcfcf" stroke-width="1"/></svg>
<div class="a" style="left:1827px;top:175px;width:69px;height:21px;background:#454545;border:1px solid #5f5f5f;border-radius:2px"></div>
<div class="a pp" style="left:1834px;top:180px">1</div>
<div class="a" style="left:1804px;top:205px;width:12px;height:12px;border:1px solid #c0c0c0;border-radius:2px"></div>
<div class="a pp" style="left:1822px;top:207px">Разворот</div>

<div class="a pp" style="left:1677px;top:233px">Поля</div>
<svg style="left:1677px;top:256px" width="16" height="16"><rect x="0" y="0" width="16" height="4" fill="#cfcfcf"/><rect x="0.5" y="7.5" width="15" height="8" stroke="#cfcfcf" stroke-width="1" fill="none"/></svg>
<svg style="left:1677px;top:282px" width="16" height="16"><rect x="0.5" y="0.5" width="15" height="8" stroke="#cfcfcf" stroke-width="1" fill="none"/><rect x="0" y="12" width="16" height="4" fill="#cfcfcf"/></svg>
<div class="a pf" style="left:1697px;top:254px;width:74px;height:21px"><div class="ps"></div><svg style="left:3px;top:3px" width="12" height="15"><path d="M2 5L6 1.5L10 5M2 10L6 13.5L10 10" stroke="#c8c8c8" stroke-width="1" fill="none"/></svg><div class="pv">36 пикс.</div></div>
<div class="a pf" style="left:1697px;top:280px;width:74px;height:21px"><div class="ps"></div><svg style="left:3px;top:3px" width="12" height="15"><path d="M2 5L6 1.5L10 5M2 10L6 13.5L10 10" stroke="#c8c8c8" stroke-width="1" fill="none"/></svg><div class="pv">36 пикс.</div></div>
<div class="a" style="left:1776px;top:265px;width:22px;height:22px;background:#2e2e2e;border-radius:3px"></div>
<svg style="left:1783px;top:268px" width="8" height="16"><g transform="rotate(22 4 8)"><rect x="1" y="1" width="6" height="8" rx="3" stroke="#d0d0d0" stroke-width="1.3" fill="none"/><rect x="1" y="7" width="6" height="8" rx="3" stroke="#d0d0d0" stroke-width="1.3" fill="none"/></g></svg>
<svg style="left:1804px;top:256px" width="16" height="17"><rect x="0" y="0" width="4" height="17" fill="#cfcfcf"/><rect x="7.5" y="0.5" width="8" height="16" stroke="#cfcfcf" stroke-width="1" fill="none"/></svg>
<svg style="left:1804px;top:282px" width="16" height="17"><rect x="0.5" y="0.5" width="8" height="16" stroke="#cfcfcf" stroke-width="1" fill="none"/><rect x="12" y="0" width="4" height="17" fill="#cfcfcf"/></svg>
<div class="a pf" style="left:1823px;top:254px;width:74px;height:21px"><div class="ps"></div><svg style="left:3px;top:3px" width="12" height="15"><path d="M2 5L6 1.5L10 5M2 10L6 13.5L10 10" stroke="#c8c8c8" stroke-width="1" fill="none"/></svg><div class="pv">36 пикс.</div></div>
<div class="a pf" style="left:1823px;top:280px;width:74px;height:21px"><div class="ps"></div><svg style="left:3px;top:3px" width="12" height="15"><path d="M2 5L6 1.5L10 5M2 10L6 13.5L10 10" stroke="#c8c8c8" stroke-width="1" fill="none"/></svg><div class="pv">36 пикс.</div></div>

<div class="a pb" style="left:1677px;top:316px;width:220px;height:21px">Настройка макета</div>
<div class="a" style="left:1667px;top:342px;width:253px;height:1px;background:#4a4a4a"></div>
<div class="a pp" style="left:1677px;top:355px">Страница</div>
<div class="a" style="left:1677px;top:375px;width:94px;height:21px;background:#454545;border:1px solid #5f5f5f;border-radius:2px"></div>
<div class="a" style="left:1752px;top:376px;width:1px;height:19px;background:#5f5f5f"></div>
<div class="a pp" style="left:1682px;top:380px">1</div>
<svg style="left:1757px;top:383px" width="9" height="6"><path d="M1 1L4.5 4.5L8 1" stroke="#d0d0d0" stroke-width="1.1" fill="none"/></svg>
<svg style="left:1850px;top:381px" width="12" height="12"><rect x="0.5" y="0.5" width="11" height="11" stroke="#bdbdbd" stroke-width="1" fill="none"/><path d="M6 3V9M3 6H9" stroke="#d0d0d0" stroke-width="1.2"/></svg>
<svg style="left:1877px;top:380px" width="12" height="13"><path d="M0 2H12M4 2V0.5H8V2" stroke="#777" stroke-width="1" fill="none"/><path d="M1.5 3.5H10.5V12.5H1.5Z M4 5V11M6 5V11M8 5V11" stroke="#777" stroke-width="1" fill="none"/></svg>
<div class="a pb" style="left:1677px;top:404px;width:220px;height:21px">Редактировать стр.</div>
<div class="a" style="left:1667px;top:432px;width:253px;height:1px;background:#4a4a4a"></div>

<div class="a pp" style="left:1677px;top:448px">Линейки и сетки</div>
<div class="a" style="left:1798px;top:443px;width:22px;height:21px;background:#2e2e2e;border-radius:3px"></div>
<svg style="left:1800px;top:445px" width="18" height="17"><path d="M1 1H17V5H5V16H1Z" fill="#d8d8d8"/><path d="M7 3H8M10 3H11M13 3H14M3 7V8M3 10V11M3 13V14" stroke="#333" stroke-width="1"/></svg>
<svg style="left:1838px;top:445px" width="17" height="17"><rect x="0.5" y="0.5" width="16" height="16" stroke="#c4c4c4" stroke-width="1" fill="none"/><path d="M1 4.5H16M1 8.5H16M1 12.5H16" stroke="#c4c4c4" stroke-width="1"/></svg>
<svg style="left:1877px;top:445px" width="17" height="17"><rect x="0.5" y="0.5" width="16" height="16" stroke="#c4c4c4" stroke-width="1" fill="none"/><path d="M1 5.5H16M1 11.5H16M5.5 1V16M11.5 1V16" stroke="#c4c4c4" stroke-width="1"/></svg>
<div class="a" style="left:1667px;top:472px;width:253px;height:1px;background:#4a4a4a"></div>

<div class="a pp" style="left:1677px;top:488px">Направляющие</div>
<div class="a" style="left:1798px;top:482px;width:22px;height:22px;background:#2e2e2e;border-radius:3px"></div>
<svg style="left:1801px;top:485px" width="16" height="16"><path d="M0 5.5H16M0 10.5H16M4.5 1V15" stroke="#d8d8d8" stroke-width="1.2"/></svg>
<div class="a" style="left:1836px;top:482px;width:22px;height:22px;background:#2e2e2e;border-radius:3px"></div>
<svg style="left:1839px;top:485px" width="17" height="17"><path d="M0 5.5H14M0 10.5H8M4.5 1V15M7.5 1V15" stroke="#d8d8d8" stroke-width="1.2"/><rect x="10" y="11" width="7" height="6" fill="#d8d8d8"/><path d="M11.5 11V9Q13.5 7 15.5 9V11" stroke="#d8d8d8" stroke-width="1" fill="none"/></svg>
<div class="a" style="left:1874px;top:482px;width:22px;height:22px;background:#2e2e2e;border-radius:3px"></div>
<svg style="left:1877px;top:485px" width="17" height="17"><path d="M0 4.5H15M4.5 1V15M2 2L4.5 4.5L2 7" stroke="#d8d8d8" stroke-width="1.2" fill="none"/><path d="M13 7L9 12H12L10 17L15 11H12Z" fill="#d8d8d8"/></svg>
<div class="a" style="left:1667px;top:511px;width:253px;height:1px;background:#4a4a4a"></div>

<div class="a pp" style="left:1677px;top:519px">Быстрые действия</div>
<div class="a pb" style="left:1677px;top:539px;width:220px;height:21px">Импорт файла</div>
<div class="a pb" style="left:1677px;top:570px;width:220px;height:21px">Текст в изображение</div>

</body></html>
